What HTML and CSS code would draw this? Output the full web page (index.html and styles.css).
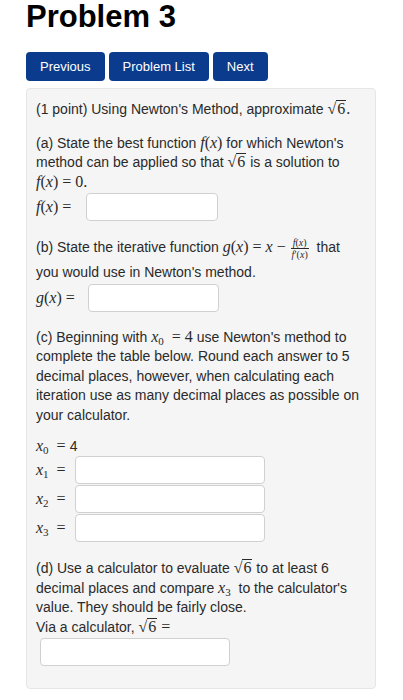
FILE: index.html
```html
<!DOCTYPE html>
<html>
<head>
<meta charset="utf-8">
<link rel="stylesheet" href="styles.css">
</head>
<body>
<h1 class="title">Problem 3</h1>
<div class="nav">
  <a class="btn">Previous</a>
  <a class="btn">Problem List</a>
  <a class="btn">Next</a>
</div>
<div class="well">
  <p class="p1">(1 point) Using Newton's Method, approximate <span class="m"><span class="sqrt">√<span class="rad">6</span></span>.</span></p>

  <p class="pa">(a) State the best function <span class="m"><i>f</i>(<i>x</i>)</span> for which Newton's method can be applied so that <span class="m"><span class="sqrt">√<span class="rad">6</span></span></span> is a solution to <span class="m"><i>f</i>(<i>x</i>) = 0.</span></p>
  <div class="row">
    <span class="m lbl-f"><i>f</i>(<i>x</i>) =</span>
    <span class="inp w132"></span>
  </div>

  <p class="pb">(b) State the iterative function <span class="m"><i>g</i>(<i>x</i>) = <i>x</i> − </span><span class="frac"><span class="num"><i>f</i>(<i>x</i>)</span><span class="den"><i>f</i>′(<i>x</i>)</span></span> that<br>you would use in Newton's method.</p>
  <div class="row">
    <span class="m lbl-g"><i>g</i>(<i>x</i>) =</span>
    <span class="inp w131"></span>
  </div>

  <p class="pc">(c) Beginning with <span class="m"><i>x</i><sub>0</sub> &nbsp;= 4</span> use Newton's method to complete the table below. Round each answer to 5 decimal places, however, when calculating each iteration use as many decimal places as possible on your calculator.</p>

  <div class="table">
    <div class="x0"><span class="m"><i>x</i><sub>0</sub> &nbsp;= </span>4</div>
    <div class="row xr">
      <span class="m lbl-x"><i>x</i><sub>1</sub> &nbsp;=</span>
      <span class="inp w190"></span>
    </div>
    <div class="row xr">
      <span class="m lbl-x"><i>x</i><sub>2</sub> &nbsp;=</span>
      <span class="inp w190"></span>
    </div>
    <div class="row xr">
      <span class="m lbl-x"><i>x</i><sub>3</sub> &nbsp;=</span>
      <span class="inp w190"></span>
    </div>
  </div>

  <p class="pd">(d) Use a calculator to evaluate <span class="m"><span class="sqrt">√<span class="rad">6</span></span></span> to at least 6 decimal places and compare <span class="m"><i>x</i><sub>3</sub></span> &nbsp;to the calculator's value. They should be fairly close.<br>Via a calculator, <span class="m"><span class="sqrt">√<span class="rad">6</span></span> =</span></p>
  <div class="row">
    <span class="inp w190 last"></span>
  </div>
</div>
<div class="scroll"></div>
</body>
</html>
```
FILE: styles.css
```css
html, body {
  margin: 0;
  padding: 0;
  background: #ffffff;
}
body {
  font-family: "Liberation Sans", Arial, Helvetica, sans-serif;
  color: #2a2a2a;
  padding-left: 26px;
  width: 350px;
  position: relative;
  height: 700px;
}
.title {
  margin: -1px 0 0 0;
  font-size: 31px;
  line-height: 36px;
  font-weight: bold;
  color: #000;
}
.nav {
  display: flex;
  gap: 4px;
  margin-top: 17px;
}
.btn {
  display: block;
  background: #0b3b8d;
  color: #fff;
  font-size: 13px;
  height: 29px;
  line-height: 29px;
  padding: 0 14px;
  border-radius: 4px;
}
.well {
  margin-top: 7px;
  background: #f5f5f5;
  border: 1px solid #e6e6e6;
  border-radius: 4px;
  padding: 11px 10px 22px 9px;
  font-size: 14px;
  line-height: 19.5px;
}
p {
  margin: 0;
}
.pa { margin-top: 14px; }
.pb { margin-top: 14px; line-height: 24px; }
.pc { margin-top: 15px; }
.pd { margin-top: 17px; }
.m {
  font-family: "Liberation Serif", "Times New Roman", serif;
  font-size: 16px;
  line-height: 1;
}
.m i { font-style: italic; }
.m sub {
  font-style: normal;
  font-size: 11px;
  vertical-align: -3px;
  line-height: 0;
}
.sqrt {
  white-space: nowrap;
}
.rad {
  border-top: 1px solid #2a2a2a;
  padding: 0 1px;
  line-height: 1;
  display: inline-block;
}
.frac {
  display: inline-flex;
  flex-direction: column;
  align-items: center;
  vertical-align: middle;
  font-family: "Liberation Serif", "Times New Roman", serif;
  font-size: 10px;
  line-height: 11px;
  margin: 0 4px 0 1px;
}
.frac .num {
  border-bottom: 1px solid #2a2a2a;
  padding: 0 2px;
}
.row {
  display: flex;
  align-items: center;
  height: 29px;
}
.inp {
  display: block;
  height: 28px;
  box-sizing: border-box;
  background: #fff;
  border: 1px solid #d0d0d0;
  border-radius: 4px;
}
.w132 { width: 132px; }
.w131 { width: 131px; }
.w190 { width: 190px; }
.lbl-f { width: 50px; }
.lbl-g { width: 52px; }
.lbl-x { width: 39px; }
.last { margin-left: 4px; }
.table {
  margin-top: 12px;
}
.x0 {
  height: 18px;
}
.scroll {
  position: absolute;
  left: 397px;
  top: 161px;
  width: 3px;
  height: 494px;
  background: #8c8c8c;
  border-radius: 1px;
}
```
